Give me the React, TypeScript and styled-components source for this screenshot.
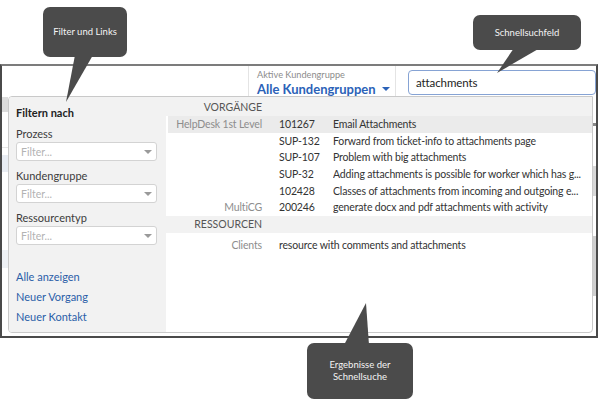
import React from "react";
import styled, { createGlobalStyle } from "styled-components";

const Global = createGlobalStyle`
  html, body { margin: 0; padding: 0; background: #fff; }
  body { font-family: Lato, "Open Sans", "Liberation Sans", sans-serif; }
  * { box-sizing: border-box; }
`;

const Stage = styled.div`
  position: relative;
  width: 600px;
  height: 408px;
  padding-top: 64px;
  background: #fff;
  overflow: hidden;
`;

const Frame = styled.div`
  width: 598px;
  height: 274px;
  border: 2px solid #4a4a4a;
  border-top-color: #7c7c7c;
  display: flex;
  flex-direction: column;
  background: #fff;
`;

const Header = styled.div`
  height: 30px;
  display: flex;
  align-items: stretch;
`;

const HeaderSpacer = styled.div`
  width: 246px;
`;

const Divider = styled.div`
  width: 1px;
  background: #e4e4e4;
`;

const GroupBox = styled.div`
  width: 146px;
  padding: 3px 0 0 8px;
  display: flex;
  flex-direction: column;
`;

const GroupLabel = styled.div`
  font-size: 9.2px;
  line-height: 12px;
  color: #8c8c8c;
`;

const GroupValue = styled.div`
  display: flex;
  align-items: center;
  gap: 6px;
  font-size: 13px;
  font-weight: 700;
  line-height: 16px;
  color: #2b62b8;
`;

const Caret = styled.span<{ $color: string; $w: number }>`
  display: inline-block;
  width: 0;
  height: 0;
  border-left: ${(p) => p.$w / 2}px solid transparent;
  border-right: ${(p) => p.$w / 2}px solid transparent;
  border-top: ${(p) => Math.round(p.$w * 0.55)}px solid ${(p) => p.$color};
`;

const SearchWrap = styled.div`
  flex: 1;
  padding: 4px 0 1px 12px;
`;

const SearchInput = styled.div`
  height: 25px;
  border: 1px solid #86a3d4;
  border-radius: 4px;
  padding-left: 7px;
  display: flex;
  align-items: center;
  font-size: 11.5px;
  letter-spacing: -0.1px;
  color: #222;
  background: #fff;
`;

const Content = styled.div`
  flex: 1;
  display: flex;
  align-items: flex-start;
`;

const Edge = styled.div<{ $w: number }>`
  width: ${(p) => p.$w}px;
  align-self: stretch;
  display: flex;
  flex-direction: column;
`;

const Hint = styled.div<{ $h: number; $bg: string; $mt?: number }>`
  height: ${(p) => p.$h}px;
  margin-top: ${(p) => p.$mt ?? 0}px;
  background: ${(p) => p.$bg};
`;

const Panel = styled.div`
  width: 585px;
  height: 237px;
  border: 1px solid #c9c9c9;
  border-radius: 4px 0 4px 4px;
  display: flex;
  overflow: hidden;
  background: #fff;
`;

const FilterPane = styled.div`
  width: 157px;
  background: #f2f2f2;
  padding: 8px 0 0 7px;
  display: flex;
  flex-direction: column;
`;

const PaneTitle = styled.div`
  font-size: 11px;
  font-weight: 700;
  line-height: 16px;
  color: #222;
  margin-bottom: 5px;
`;

const FieldLabel = styled.div`
  font-size: 11px;
  line-height: 16px;
  color: #3c3c3c;
`;

const Select = styled.div`
  width: 141px;
  height: 19px;
  margin-bottom: 7px;
  border: 1px solid #d3d3d3;
  border-radius: 3px;
  background: #fff;
  display: flex;
  align-items: center;
  justify-content: space-between;
  padding: 0 4px 0 4px;
  font-size: 10.5px;
  color: #b3b3b3;
`;

const Links = styled.div`
  margin-top: 15px;
  display: flex;
  flex-direction: column;
`;

const LinkItem = styled.a`
  font-size: 11px;
  line-height: 20px;
  color: #2b5ea8;
  text-decoration: none;
`;

const Results = styled.div`
  flex: 1;
  display: flex;
  flex-direction: column;
`;

const Section = styled.div<{ $h: number }>`
  height: ${(p) => p.$h}px;
  background: #f2f2f2;
  padding-left: 2px;
  display: grid;
  grid-template-columns: 94px 1fr;
  align-items: center;
  font-size: 10.5px;
  color: #555;
  text-transform: uppercase;
`;

const SectionName = styled.div`
  text-align: right;
`;

const RowGroup = styled.div<{ $pt?: number }>`
  padding: ${(p) => p.$pt ?? 0}px 0 0 2px;
  display: flex;
  flex-direction: column;
`;

const Row = styled.div<{ $active?: boolean }>`
  height: 16.6px;
  display: grid;
  grid-template-columns: 94px 71px 1fr;
  align-items: center;
  background: ${(p) => (p.$active ? "#ebebeb" : "transparent")};
  font-size: 10.5px;
  letter-spacing: -0.15px;
  white-space: nowrap;
`;

const Cat = styled.div`
  text-align: right;
  color: #8d8d8d;
`;

const Id = styled.div`
  padding-left: 17px;
  color: #333;
`;

const Title = styled.div`
  color: #333;
  overflow: hidden;
`;

const Overlay = styled.svg`
  position: absolute;
  left: 0;
  top: 0;
  pointer-events: none;
`;

const Callout = styled.div<{ $x: number; $y: number; $w: number; $h: number }>`
  position: absolute;
  left: ${(p) => p.$x}px;
  top: ${(p) => p.$y}px;
  width: ${(p) => p.$w}px;
  height: ${(p) => p.$h}px;
  background: #4b4b4b;
  border-radius: 7px;
  color: #f4f4f4;
  font-size: 9.5px;
  line-height: 12px;
  display: flex;
  align-items: center;
  justify-content: center;
  text-align: center;
`;

type Item = { cat: string; id: string; title: string; active?: boolean };

const vorgaenge: Item[] = [
  { cat: "HelpDesk 1st Level", id: "101267", title: "Email Attachments", active: true },
  { cat: "", id: "SUP-132", title: "Forward from ticket-info to attachments page" },
  { cat: "", id: "SUP-107", title: "Problem with big attachments" },
  { cat: "", id: "SUP-32", title: "Adding attachments is possible for worker which has g..." },
  { cat: "", id: "102428", title: "Classes of attachments from incoming and outgoing e..." },
  { cat: "MultiCG", id: "200246", title: "generate docx and pdf attachments with activity" },
];

const filters = ["Prozess", "Kundengruppe", "Ressourcentyp"];

export default function App() {
  return (
    <>
      <Global />
      <Stage>
        <Frame>
          <Header>
            <HeaderSpacer />
            <Divider />
            <GroupBox>
              <GroupLabel>Aktive Kundengruppe</GroupLabel>
              <GroupValue>
                Alle Kundengruppen <Caret $color="#2b62b8" $w={8} />
              </GroupValue>
            </GroupBox>
            <Divider />
            <SearchWrap>
              <SearchInput>attachments</SearchInput>
            </SearchWrap>
          </Header>
          <Content>
            <Edge $w={6}>
              <Hint $h={15} $bg="#dcdcdc" $mt={1} />
              <Hint $h={1} $bg="#e6e6e6" $mt={35} />
              <Hint $h={17} $bg="#e9edf3" $mt={7} />
              <Hint $h={18} $bg="#eef1f5" $mt={78} />
            </Edge>
            <Panel>
              <FilterPane>
                <PaneTitle>Filtern nach</PaneTitle>
                {filters.map((f) => (
                  <React.Fragment key={f}>
                    <FieldLabel>{f}</FieldLabel>
                    <Select>
                      Filter...
                      <Caret $color="#9a9a9a" $w={8} />
                    </Select>
                  </React.Fragment>
                ))}
                <Links>
                  <LinkItem>Alle anzeigen</LinkItem>
                  <LinkItem>Neuer Vorgang</LinkItem>
                  <LinkItem>Neuer Kontakt</LinkItem>
                </Links>
              </FilterPane>
              <Results>
                <Section $h={19}>
                  <SectionName>Vorgänge</SectionName>
                </Section>
                <RowGroup>
                  {vorgaenge.map((r) => (
                    <Row key={r.id} $active={r.active}>
                      <Cat>{r.cat}</Cat>
                      <Id>{r.id}</Id>
                      <Title>{r.title}</Title>
                    </Row>
                  ))}
                </RowGroup>
                <Section $h={17}>
                  <SectionName>Ressourcen</SectionName>
                </Section>
                <RowGroup $pt={4}>
                  <Row>
                    <Cat>Clients</Cat>
                    <Id>resource with comments and attachments</Id>
                  </Row>
                </RowGroup>
              </Results>
            </Panel>
            <Edge $w={3}>
              <Hint $h={3} $bg="#888" $mt={27} />
              <Hint $h={30} $bg="#d8d8d8" $mt={40} />
              <Hint $h={60} $bg="#cfcfcf" $mt={40} />
            </Edge>
          </Content>
        </Frame>

        <Overlay width={600} height={408} viewBox="0 0 600 408">
          <polygon points="75,55 93,55 66,102" fill="#4b4b4b" />
          <polygon points="514,48 540,48 497,73" fill="#4b4b4b" />
          <polygon points="344,345 369,345 366,303" fill="#4b4b4b" />
        </Overlay>
        <Callout $x={43} $y={7} $w={84} $h={50}>Filter und Links</Callout>
        <Callout $x={473} $y={15} $w={108} $h={35}>Schnellsuchfeld</Callout>
        <Callout $x={307} $y={343} $w={106} $h={56}>
          Ergebnisse der
          <br />
          Schnellsuche
        </Callout>
      </Stage>
    </>
  );
}
